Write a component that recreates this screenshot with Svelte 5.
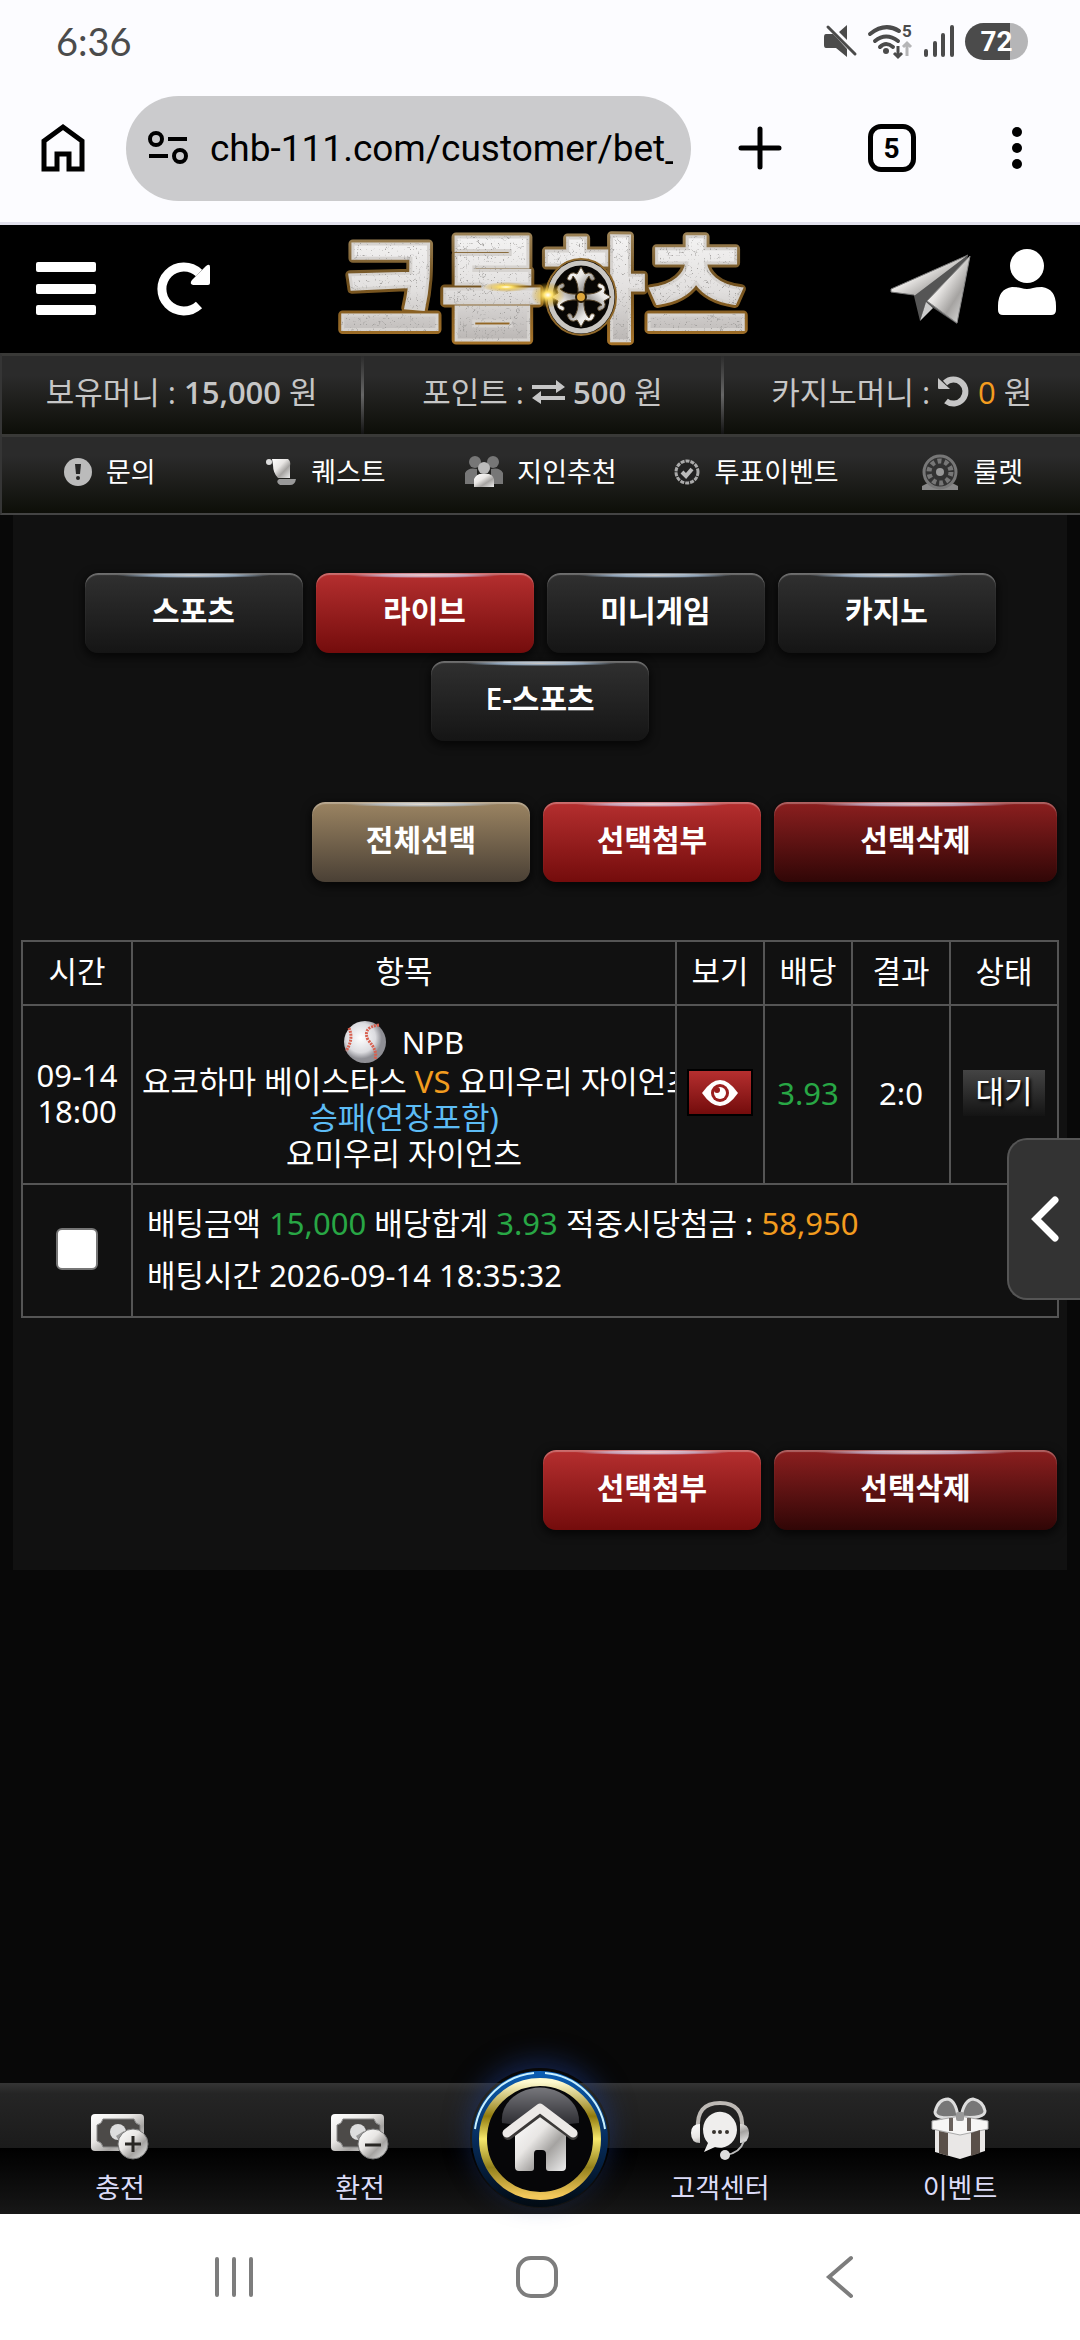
<script lang="ts">
	interface Category {
		id: string;
		label: string;
	}

	const categories: Category[] = [
		{ id: 'sports', label: '스포츠' },
		{ id: 'live', label: '라이브' },
		{ id: 'mini', label: '미니게임' },
		{ id: 'casino', label: '카지노' },
		{ id: 'esports', label: 'E-스포츠' }
	];

	let active = $state('live');
	let checked = $state(false);
	let address = $state('chb-111.com/customer/bet_');
</script>

{#snippet bill(sign: string)}
	<svg width="60" height="48" viewBox="0 0 60 48" aria-hidden="true">
		<rect x="1" y="2" width="53" height="37" rx="4" fill="url(#silver)" />
		<path d="M13 7H44Q45 12 50 13V29Q45 30 44 35H13Q12 30 7 29V13Q12 12 13 7Z" fill="#4c4a48" stroke="#888" />
		<circle cx="28" cy="20" r="8" fill="#ddd" />
		<path d="M26 24L34 19 40 28 32 34Z" fill="#999" />
		<circle cx="43" cy="32" r="15" fill="url(#silver)" stroke="#777" />
		<path d={sign === 'plus' ? 'M35 32H51M43 24V40' : 'M35 33H51'} stroke="#292724" stroke-width="3" />
	</svg>
{/snippet}

<div class="page">
	<svg class="defs" width="0" height="0" aria-hidden="true">
		<defs>
			<linearGradient id="silver" x1="0" y1="0" x2="1" y2="1">
				<stop offset="0" stop-color="#fff" />
				<stop offset="0.4" stop-color="#e8e6e4" />
				<stop offset="0.65" stop-color="#a5a3a1" />
				<stop offset="1" stop-color="#eee" />
			</linearGradient>
			<linearGradient id="gold" x1="0" y1="0" x2="0" y2="1">
				<stop offset="0" stop-color="#fffbd0" />
				<stop offset="0.3" stop-color="#917b0d" />
				<stop offset="0.5" stop-color="#f6e76c" />
				<stop offset="0.75" stop-color="#92801b" />
				<stop offset="1" stop-color="#f3c85b" />
			</linearGradient>
		</defs>
	</svg>

	<div class="status">
		<span class="time">6:36</span>
		<div class="status-icons">
			<svg width="34" height="34" viewBox="0 0 34 34" aria-hidden="true">
				<path d="M3 10H10L14 14 24 25V33L13 24H3Q1 24 1 21V13Q1 10 3 10ZM16 8L24 1V16Z" fill="#4b4b4b" />
				<path d="M5 3L32 30" stroke="#4b4b4b" stroke-width="3" stroke-linecap="round" />
			</svg>
			<svg width="46" height="36" viewBox="0 0 46 36" aria-hidden="true">
				<g fill="none" stroke="#4b4b4b" stroke-width="4" stroke-linecap="round">
					<path d="M3 11Q18-1 32 8M8 18Q19 9 31 18M13 24Q19 18 26 24" />
				</g>
				<circle cx="19" cy="28" r="3" fill="#4b4b4b" />
				<path d="M31 23V33M27 30L31 34 35 30" fill="none" stroke="#4b4b4b" stroke-width="3" />
				<path d="M40 33V20M36 24L40 20 44 24" fill="none" stroke="#b5b5b7" stroke-width="3" />
				<text x="35" y="14" class="wifi-number">5</text>
			</svg>
			<svg width="32" height="34" viewBox="0 0 32 34" aria-hidden="true">
				<path d="M3 27V31M12 19V31M20 11V31M29 3V31" stroke="#4b4b4b" stroke-width="4" stroke-linecap="round" />
			</svg>
			<span class="battery">72</span>
		</div>
	</div>

	<div class="browser">
		<button class="plain" aria-label="Home">
			<svg width="44" height="48" viewBox="0 0 44 48"><path d="M3 17L22 3 41 17V45H28V30H16V45H3Z" fill="none" stroke="#000" stroke-width="5" /></svg>
		</button>
		<label class="address">
			<svg width="40" height="34" viewBox="0 0 40 34" aria-hidden="true">
				<g fill="none" stroke="#000" stroke-width="4">
					<circle cx="8" cy="8" r="6" /><circle cx="32" cy="25" r="6" />
					<path d="M20 8H39M1 25H20" />
				</g>
			</svg>
			<input type="text" aria-label="Address" bind:value={address} />
		</label>
		<div class="browser-tools">
			<button class="plain" aria-label="New tab">
				<svg width="44" height="44" viewBox="0 0 44 44"><path d="M22 3V41M3 22H41" stroke="#000" stroke-width="5" stroke-linecap="round" /></svg>
			</button>
			<button class="tab-count" aria-label="Tabs">5</button>
			<button class="plain" aria-label="Menu">
				<svg width="12" height="44" viewBox="0 0 12 44"><circle cx="6" cy="6" r="5" /><circle cx="6" cy="22" r="5" /><circle cx="6" cy="38" r="5" /></svg>
			</button>
		</div>
	</div>

	<header class="header">
		<div class="header-side">
			<button class="plain" aria-label="메뉴">
				<svg width="60" height="54" viewBox="0 0 60 54"><g fill="#fff"><rect width="60" height="10" rx="2" /><rect y="22" width="60" height="10" rx="2" /><rect y="43" width="60" height="10" rx="2" /></g></svg>
			</button>
			<button class="plain" aria-label="새로고침">
				<svg width="52" height="54" viewBox="0 0 52 54">
					<path d="M41 43A22 22 0 1 1 41 11" fill="none" stroke="#fff" stroke-width="9" />
					<path d="M52 5V21Q52 23 50 23H35Q31 22 34 18L48 4Q52 1 52 5Z" fill="#fff" />
				</svg>
			</button>
		</div>
		<a class="logo" href="#top" aria-label="크롬하츠">
			<svg width="420" height="128" viewBox="0 0 420 128">
				<defs>
					<linearGradient id="metal" x1="0" y1="0" x2="0" y2="1">
						<stop offset="0" stop-color="#fff" />
						<stop offset="0.55" stop-color="#e2e0df" />
						<stop offset="1" stop-color="#aaa5a2" />
					</linearGradient>
					<linearGradient id="edge" x1="0" y1="0" x2="0" y2="1">
						<stop offset="0" stop-color="#b9a37b" />
						<stop offset="0.5" stop-color="#70501e" />
						<stop offset="1" stop-color="#b47c2c" />
					</linearGradient>
					<radialGradient id="flare">
						<stop offset="0" stop-color="#fff" />
						<stop offset="0.25" stop-color="#ffe36a" />
						<stop offset="1" stop-color="#c48a00" stop-opacity="0" />
					</radialGradient>
					<filter id="crackle">
						<feTurbulence type="turbulence" baseFrequency="0.16" numOctaves="2" seed="4" result="noise" />
						<feColorMatrix in="noise" type="matrix" values="0 0 0 0 0.35  0 0 0 0 0.34  0 0 0 0 0.33  -9 0 0 0 0.9" result="lines" />
						<feComposite in="lines" in2="SourceAlpha" operator="in" result="cracks" />
						<feMerge><feMergeNode in="SourceGraphic" /><feMergeNode in="cracks" /></feMerge>
					</filter>
				</defs>
				<text x="207" y="105" text-anchor="middle" class="mark mark-edge">크롬하츠</text>
				<text x="207" y="105" text-anchor="middle" class="mark mark-face" filter="url(#crackle)">크롬하츠</text>
				<ellipse cx="245" cy="72" rx="35" ry="38" fill="#080604" stroke="#8e672a" stroke-width="2" />
				<ellipse cx="245" cy="72" rx="31" ry="34" fill="none" stroke="#c9c6c2" stroke-width="5" />
				<g fill="url(#silver)" stroke="#5c4a30" stroke-width="1">
					{#each [0, 90, 180, 270] as angle (angle)}
						<path transform="rotate({angle} 245 72)" d="M242 70Q243 57 237 51Q235 58 231 54Q234 45 241 49L245 42 249 49Q256 45 259 54Q255 58 253 51Q247 57 248 70Z" />
					{/each}
				</g>
				<circle cx="245" cy="72" r="5" fill="#dfa63a" stroke="#2a1c08" stroke-width="2" />
				<ellipse cx="212" cy="70" rx="17" ry="13" fill="url(#flare)" />
				<ellipse cx="170" cy="62" rx="24" ry="5" fill="url(#flare)" />
			</svg>
		</a>
		<div class="header-side end">
			<a href="#telegram" aria-label="텔레그램">
				<svg width="80" height="70" viewBox="0 0 80 70">
					<path d="M0 35L77 1 29 47 23 41 0 38Z" fill="url(#silver)" stroke="#777" />
					<path d="M77 1L23 42 29 67 35 49 66 70Z" fill="#555" />
					<path d="M79 2L36 47 66 69Z" fill="url(#silver)" stroke="#888" />
					<path d="M29 67L35 48 42 54Z" fill="#ccc" />
				</svg>
			</a>
			<a class="profile" href="#profile" aria-label="내 정보">
				<svg width="58" height="66" viewBox="0 0 58 66"><circle cx="29" cy="17" r="17" fill="#fff" /><path d="M14 38Q20 38 23 39Q29 41 35 39Q38 38 44 38Q58 40 58 57V61Q58 66 53 66H5Q0 66 0 61V57Q0 40 14 38Z" fill="#fff" /></svg>
			</a>
		</div>
	</header>

	<div class="bar wallet">
		<div>보유머니 : <b>15,000</b> 원</div>
		<div>
			포인트 :
			<svg width="33" height="24" viewBox="0 0 33 24" aria-hidden="true"><path d="M0 5H24V0L33 7 24 13V9H0ZM33 16H9V11L0 18 9 24V20H33Z" fill="#c6c6c6" /></svg>
			<b>500</b> 원
		</div>
		<div>
			카지노머니 :
			<svg width="32" height="32" viewBox="0 0 32 32" aria-hidden="true"><path d="M7 7A12 12 0 1 1 8 25" fill="none" stroke="#c6c6c6" stroke-width="6" /><path d="M0 2L12 13H1Q0 13 0 12Z" fill="#c6c6c6" /></svg>
			<span class="orange">0</span> 원
		</div>
	</div>

	<nav class="bar shortcuts">
		<a href="#ask">
			<svg width="28" height="28" viewBox="0 0 28 28" aria-hidden="true"><circle cx="14" cy="14" r="14" fill="#bbb" /><path d="M11 6H17L16 16H12Z" fill="#252525" /><circle cx="14" cy="20" r="2" fill="#252525" /></svg>
			문의
		</a>
		<a href="#quest">
			<svg width="32" height="28" viewBox="0 0 32 28" aria-hidden="true"><path d="M7 1H23Q26 3 25 8V20H13Q8 15 8 7Z" fill="url(#silver)" /><circle cx="4" cy="4" r="3" fill="#ddd" /><path d="M14 21H31Q30 27 25 27H15Q10 24 14 21Z" fill="#999" /></svg>
			퀘스트
		</a>
		<a href="#invite">
			<svg width="38" height="32" viewBox="0 0 38 32" aria-hidden="true">
				<g fill="#777"><circle cx="10" cy="6" r="6" /><circle cx="28" cy="6" r="6" /><path d="M0 28V17Q3 11 12 13V28ZM38 28V17Q35 11 26 13V28Z" /></g>
				<circle cx="19" cy="12" r="6" fill="#bbb" /><path d="M9 31V23Q12 17 19 18Q27 17 29 23V31Z" fill="url(#silver)" />
			</svg>
			지인추천
		</a>
		<a href="#vote">
			<svg width="26" height="30" viewBox="0 0 26 30" aria-hidden="true"><circle cx="13" cy="15" r="11" fill="#222" stroke="#aaa" stroke-width="3" stroke-dasharray="4 1" /><path d="M8 15L12 19 18 12" fill="none" stroke="#bbb" stroke-width="4" /></svg>
			투표이벤트
		</a>
		<a href="#roulette">
			<svg width="38" height="38" viewBox="0 0 38 38" aria-hidden="true"><path d="M1 37V33L9 29H29L37 33V37Z" fill="#888" /><circle cx="19" cy="19" r="16" fill="#333" stroke="#777" stroke-width="3" /><circle cx="19" cy="19" r="11" fill="none" stroke="#777" stroke-width="5" stroke-dasharray="4 3" /><circle cx="19" cy="19" r="4" fill="#999" /></svg>
			룰렛
		</a>
	</nav>

	<main class="content">
		<section class="panel">
			<div class="tabs">
				{#each categories as category (category.id)}
					<button class="btn" class:red={active === category.id} onclick={() => (active = category.id)}>{category.label}</button>
				{/each}
			</div>

			<div class="actions">
				<button class="btn tan" onclick={() => (checked = true)}>전체선택</button>
				<button class="btn red">선택첨부</button>
				<button class="btn wine">선택삭제</button>
			</div>

			<table>
				<colgroup>
					<col class="c-time" /><col /><col class="c-view" /><col class="c-odds" /><col class="c-score" /><col class="c-state" />
				</colgroup>
				<thead>
					<tr><th>시간</th><th>항목</th><th>보기</th><th>배당</th><th>결과</th><th>상태</th></tr>
				</thead>
				<tbody>
					<tr class="match">
						<td>09-14<br />18:00</td>
						<td class="item">
							<div class="league">
								<svg width="42" height="42" viewBox="0 0 42 42" aria-hidden="true">
									<defs><radialGradient id="ball" cx="0.4" cy="0.4"><stop offset="0" stop-color="#fff" /><stop offset="0.7" stop-color="#dcdce0" /><stop offset="1" stop-color="#8f8f95" /></radialGradient></defs>
									<circle cx="21" cy="21" r="21" fill="url(#ball)" />
									<path d="M5 7Q10 18 2 30M35 4Q18 6 24 19Q34 30 31 38" fill="none" stroke="#d8604f" stroke-width="3" stroke-dasharray="2 1" />
								</svg>
								NPB
							</div>
							<div>요코하마 베이스타스 <span class="orange">VS</span> 요미우리 자이언츠</div>
							<div class="blue">승패(연장포함)</div>
							<div>요미우리 자이언츠</div>
						</td>
						<td>
							<button class="view" aria-label="보기">
								<svg width="36" height="26" viewBox="0 0 36 26"><path d="M0 13Q18-13 36 13Q18 39 0 13Z" fill="#fff" /><circle cx="18" cy="13" r="9" fill="#9b1f1f" /><circle cx="18" cy="13" r="6" fill="#fff" /><circle cx="15" cy="10" r="3" fill="#9b1f1f" /></svg>
							</button>
						</td>
						<td class="green">3.93</td>
						<td>2:0</td>
						<td><span class="state">대기</span></td>
					</tr>
					<tr class="summary">
						<td><input type="checkbox" aria-label="선택" bind:checked /></td>
						<td colspan="5">
							배팅금액 <span class="green">15,000</span> 배당합계 <span class="green">3.93</span> 적중시당첨금 : <span class="orange">58,950</span><br />
							배팅시간 2026-09-14 18:35:32
						</td>
					</tr>
				</tbody>
			</table>

			<div class="actions bottom">
				<button class="btn red">선택첨부</button>
				<button class="btn wine">선택삭제</button>
			</div>
		</section>
		<button class="drawer" aria-label="열기">
			<svg width="28" height="46" viewBox="0 0 28 46"><path d="M24 4L5 23 24 42" fill="none" stroke="#fff" stroke-width="7" stroke-linecap="round" /></svg>
		</button>
	</main>

	<nav class="dock">
		<a href="#deposit">{@render bill('plus')}충전</a>
		<a href="#withdraw">{@render bill('minus')}환전</a>
		<a class="dock-home" href="#home" aria-label="홈">
			<svg width="140" height="140" viewBox="0 0 140 140">
				<defs>
					<linearGradient id="ring" x1="0" y1="0" x2="0" y2="1"><stop offset="0" stop-color="#0b5fb5" /><stop offset="0.5" stop-color="#062c5c" /><stop offset="1" stop-color="#020a12" /></linearGradient>
					<linearGradient id="gloss" x1="0" y1="0" x2="0" y2="1"><stop offset="0" stop-color="#77777c" /><stop offset="1" stop-color="#2b2b30" /></linearGradient>
				</defs>
				<circle cx="70" cy="71" r="68" fill="url(#ring)" />
				<path d="M5 61A66 66 0 0 1 64 5M75 5A66 66 0 0 1 135 61" fill="none" stroke="#c8f1ff" stroke-width="2" />
				<circle cx="70" cy="71" r="57" fill="#060608" stroke="url(#gold)" stroke-width="8" />
				<path d="M32 55Q30 35 51 24Q70 15 89 24Q110 35 109 55Q70 60 32 55Z" fill="url(#gloss)" />
				<path d="M45 67L70 47 96 67V99Q96 103 92 103H79Q76 103 76 100V86Q76 82 72 82H67Q64 82 64 86V100Q64 103 61 103H49Q45 103 45 99Z" fill="url(#silver)" />
				<path d="M38 67L70 43 103 67" fill="none" stroke="#3b3938" stroke-width="10" stroke-linecap="round" stroke-linejoin="round" />
				<path d="M37 65L70 40 103 65" fill="none" stroke="#ece9e7" stroke-width="9" stroke-linecap="round" stroke-linejoin="round" />
			</svg>
		</a>
		<a href="#support">
			<svg width="60" height="60" viewBox="0 0 60 60" aria-hidden="true">
				<path d="M8 29Q6 3 30 3Q54 3 52 29" fill="none" stroke="#bdb9b5" stroke-width="4" />
				<path d="M10 24V43Q1 43 1 33 1 24 10 24ZM50 24V43Q59 43 59 33 59 24 50 24Z" fill="url(#silver)" />
				<path d="M13 29A17 18 0 1 1 25 47L14 52 18 43Q13 38 13 29Z" fill="#efeeed" />
				<path d="M54 41Q50 53 36 55" fill="none" stroke="#bbb" stroke-width="2" /><circle cx="35" cy="55" r="5" fill="#ddd" />
				<g fill="#38332f"><circle cx="24" cy="32" r="2" /><circle cx="30" cy="32" r="2" /><circle cx="37" cy="32" r="2" /></g>
			</svg>
			고객센터
		</a>
		<a href="#event">
			<svg width="58" height="62" viewBox="0 0 58 62" aria-hidden="true">
				<path d="M27 19Q4 22 4 14 7 1 17 1 25 3 27 19ZM30 19Q33 2 42 1 52 3 54 13 54 21 30 19Z" fill="#777" stroke="#ddd" stroke-width="3" />
				<path d="M4 30L29 36 54 30V53L29 61 4 54Z" fill="#e9e7e6" />
				<path d="M1 23L29 18 57 23V31L29 37 1 31Z" fill="#f7f6f5" stroke="#aaa" />
				<path d="M8 33L17 35V58L8 55ZM40 35L49 32V55L40 58Z" fill="#5a5049" />
				<path d="M20 20V33M38 20V33" stroke="#69615c" stroke-width="4" />
				<rect x="25" y="14" width="8" height="9" rx="2" fill="#999" />
			</svg>
			이벤트
		</a>
	</nav>

	<div class="system">
		<button class="plain" aria-label="Recents"><svg width="40" height="42" viewBox="0 0 40 42"><path d="M3 3V39M20 3V39M37 3V39" stroke="#7d7d7d" stroke-width="4" stroke-linecap="round" /></svg></button>
		<button class="plain" aria-label="Home"><svg width="44" height="44" viewBox="0 0 44 44"><rect x="3" y="3" width="38" height="38" rx="13" fill="none" stroke="#7d7d7d" stroke-width="4" /></svg></button>
		<button class="plain" aria-label="Back"><svg width="28" height="44" viewBox="0 0 28 44"><path d="M25 3L3 22 25 41" fill="none" stroke="#7d7d7d" stroke-width="4" stroke-linecap="round" /></svg></button>
	</div>
</div>

<style>
	:global(body) {
		margin: 0;
		background: #090909;
	}

	.page {
		display: flex;
		flex-direction: column;
		min-height: 100vh;
		background: #080808;
		color: #fff;
		font-family: 'Open Sans', 'Noto Sans CJK KR', sans-serif;
		font-size: 31px;
		font-weight: 380;
		line-height: 36px;
	}

	.page svg {
		flex: none;
		display: block;
		overflow: visible;
	}

	.page .defs {
		position: absolute;
	}

	button,
	input {
		margin: 0;
		font: inherit;
	}

	a {
		color: inherit;
		text-decoration: none;
	}

	.plain {
		padding: 0;
		border: 0;
		background: none;
	}

	.orange {
		color: #f39c1f;
	}

	.green {
		color: #28a745;
	}

	.blue {
		color: #5dbcf5;
	}

	/* Phone status bar */
	.status {
		display: flex;
		align-items: center;
		justify-content: space-between;
		height: 82px;
		padding: 0 52px 0 56px;
		background: #fcfcff;
		color: #4b4b4b;
		box-sizing: border-box;
	}

	.time {
		font-family: Lato, sans-serif;
		font-size: 38px;
		font-weight: 400;
	}

	.status-icons {
		display: flex;
		align-items: center;
		gap: 10px;
	}

	.wifi-number {
		font: 700 17px Roboto, sans-serif;
		fill: #4b4b4b;
	}

	.battery {
		width: 63px;
		border-radius: 19px;
		background: linear-gradient(90deg, #4b4b4b 72%, #b5b5b7 72%);
		color: #fff;
		font: 700 28px/37px Roboto, sans-serif;
		text-align: center;
	}

	/* Browser toolbar */
	.browser {
		display: flex;
		align-items: center;
		gap: 41px;
		height: 143px;
		padding: 0 57px 8px 41px;
		border-bottom: 3px solid #e2e1ed;
		background: #fcfcff;
		box-sizing: border-box;
	}

	.address {
		flex: 1;
		display: flex;
		align-items: center;
		gap: 22px;
		min-width: 0;
		height: 105px;
		padding: 0 18px 0 22px;
		border-radius: 53px;
		background: #cbcbcd;
		box-sizing: border-box;
	}

	.address input {
		flex: 1;
		min-width: 0;
		padding: 0;
		border: 0;
		background: none;
		color: #000;
		font: 37px Roboto, sans-serif;
	}

	.browser-tools {
		display: flex;
		align-items: center;
		justify-content: space-between;
		width: 291px;
	}

	.browser-tools .plain:first-child {
		padding-left: 6px;
	}

	.browser-tools .plain:last-child {
		padding-left: 10px;
	}

	.tab-count {
		width: 48px;
		height: 48px;
		padding: 0;
		border: 5px solid #000;
		border-radius: 13px;
		background: none;
		color: #000;
		font: 700 28px Roboto, sans-serif;
	}

	/* Site header */
	.header {
		display: grid;
		grid-template-columns: 1fr auto 1fr;
		align-items: center;
		height: 128px;
		padding: 0 24px 0 36px;
		background: #000;
	}

	.header-side {
		display: flex;
		align-items: center;
		gap: 62px;
	}

	.header-side.end {
		justify-content: flex-end;
		gap: 27px;
	}

	.profile {
		padding-bottom: 14px;
	}

	.mark {
		font-family: 'Noto Sans CJK KR', sans-serif;
		font-size: 111px;
		font-weight: 900;
	}

	.mark-edge {
		fill: none;
		stroke: url(#edge);
		stroke-width: 9px;
		stroke-linejoin: round;
	}

	.mark-face {
		fill: url(#metal);
		stroke: #d6d3d0;
		stroke-width: 3px;
	}

	.bar {
		display: grid;
		height: 81px;
		border-top: 3px solid #393937;
		border-left: 2px solid #353535;
		background: linear-gradient(#2b2b2b 25%, #0d0e08);
		box-sizing: border-box;
	}

	.bar > * {
		display: flex;
		align-items: center;
		justify-content: center;
		padding-bottom: 6px;
	}

	.wallet {
		grid-template-columns: repeat(3, 1fr);
		color: #c6c6c6;
	}

	.wallet > div {
		gap: 8px;
	}

	.wallet > div + div {
		border-left: 3px solid;
		border-image: linear-gradient(#2b2b2b, #666, #111) 1;
	}

	.wallet b {
		font-weight: 600;
	}

	.shortcuts {
		grid-template-columns: repeat(5, 1fr);
		border-bottom: 2px solid #444;
		font-size: 27px;
	}

	.shortcuts a {
		gap: 14px;
	}

	/* Content */
	.content {
		position: relative;
		flex: 1;
		padding: 0 13px;
	}

	.panel {
		padding: 58px 8px 40px;
		background: #111;
	}

	.tabs {
		display: flex;
		flex-wrap: wrap;
		justify-content: center;
		gap: 8px 13px;
		padding: 0 55px;
	}

	.actions {
		display: flex;
		justify-content: flex-end;
		gap: 13px;
		margin: 61px 2px 58px;
	}

	.actions.bottom {
		margin: 132px 2px 0;
	}

	.btn {
		width: 218px;
		height: 80px;
		padding: 0 0 4px;
		border: 0;
		border-radius: 13px;
		background:
			radial-gradient(closest-side, #c8c6c4, #8ea3b9 55%, transparent) center top / 70% 5px no-repeat,
			linear-gradient(#303030, #151515);
		box-shadow:
			inset 0 2px 1px rgba(255, 255, 255, 0.3),
			0 3px 8px 2px rgba(0, 0, 0, 0.6);
		color: #fff;
		font-size: 30px;
		font-weight: 600;
	}

	.btn.red {
		background:
			radial-gradient(closest-side, #f0c0c0, #c6a0b8 55%, transparent) center top / 70% 5px no-repeat,
			linear-gradient(#b52f2f, #740c0c);
	}

	.btn.tan {
		background:
			radial-gradient(closest-side, #e0d8cc, #b0b5b8 55%, transparent) center top / 70% 5px no-repeat,
			linear-gradient(#9b8462, #4a4035);
	}

	.btn.wine {
		width: 283px;
		background:
			radial-gradient(closest-side, #dfb5b5, #b796ad 55%, transparent) center top / 70% 5px no-repeat,
			linear-gradient(#8c1f1f, #300606);
	}

	table {
		width: 100%;
		border-collapse: collapse;
		table-layout: fixed;
		font-family: 'Noto Sans', 'Noto Sans CJK KR', sans-serif;
	}

	.c-time {
		width: 110px;
	}

	.c-view,
	.c-odds {
		width: 88px;
	}

	.c-score {
		width: 98px;
	}

	.c-state {
		width: 108px;
	}

	th,
	td {
		padding: 0 0 4px;
		border: 2px solid #555;
		font-weight: 380;
		text-align: center;
	}

	thead tr {
		height: 64px;
	}

	.match {
		height: 179px;
	}

	.item {
		padding: 2px 9px 0;
		overflow: hidden;
		white-space: nowrap;
	}

	.league {
		display: flex;
		align-items: center;
		justify-content: center;
		gap: 16px;
	}

	.view {
		display: inline-flex;
		align-items: center;
		justify-content: center;
		width: 66px;
		height: 47px;
		padding: 0;
		border: 2px solid #000;
		background: linear-gradient(#b52f2f, #740c0c);
		vertical-align: middle;
	}

	.state {
		display: inline-block;
		padding: 0 12px 4px;
		background: linear-gradient(#444, #141414);
		line-height: 42px;
		text-shadow: 2px 2px 3px #000;
	}

	.summary {
		height: 133px;
		line-height: 52px;
	}

	.summary td:last-child {
		padding-left: 14px;
		text-align: left;
	}

	.summary input {
		display: block;
		width: 42px;
		height: 42px;
		margin: 0 auto;
		border: 2px solid #767676;
		border-radius: 6px;
		background: #fff;
		appearance: none;
	}

	.summary input:checked {
		background: #b52f2f;
	}

	.drawer {
		position: absolute;
		top: 623px;
		right: 0;
		display: flex;
		align-items: center;
		width: 73px;
		height: 162px;
		padding: 0 0 0 22px;
		border: 2px solid #555;
		border-right: 0;
		border-radius: 20px 0 0 20px;
		background: #333;
	}

	/* Bottom navigation */
	.dock {
		display: grid;
		grid-template-columns: 2fr 2fr 1fr 2fr 2fr;
		height: 131px;
		background: linear-gradient(#353535, #252525 8%, #1b1b1b 50%, #000 50%, #171717);
		color: #dcdcf8;
		font-size: 27px;
	}

	.dock a {
		display: flex;
		flex-direction: column;
		align-items: center;
		justify-content: flex-end;
		gap: 10px;
		padding-bottom: 8px;
	}

	.dock .dock-home {
		position: relative;
		padding: 0;
	}

	.dock-home svg {
		position: absolute;
		bottom: 6px;
		left: 50%;
		margin-left: -70px;
		border-radius: 50%;
		box-shadow: 0 -8px 26px rgba(30, 60, 140, 0.5);
	}

	.system {
		display: grid;
		grid-template-columns: repeat(3, 1fr);
		place-items: center;
		height: 126px;
		padding: 0 89px 0 83px;
		background: #fff;
	}
</style>
